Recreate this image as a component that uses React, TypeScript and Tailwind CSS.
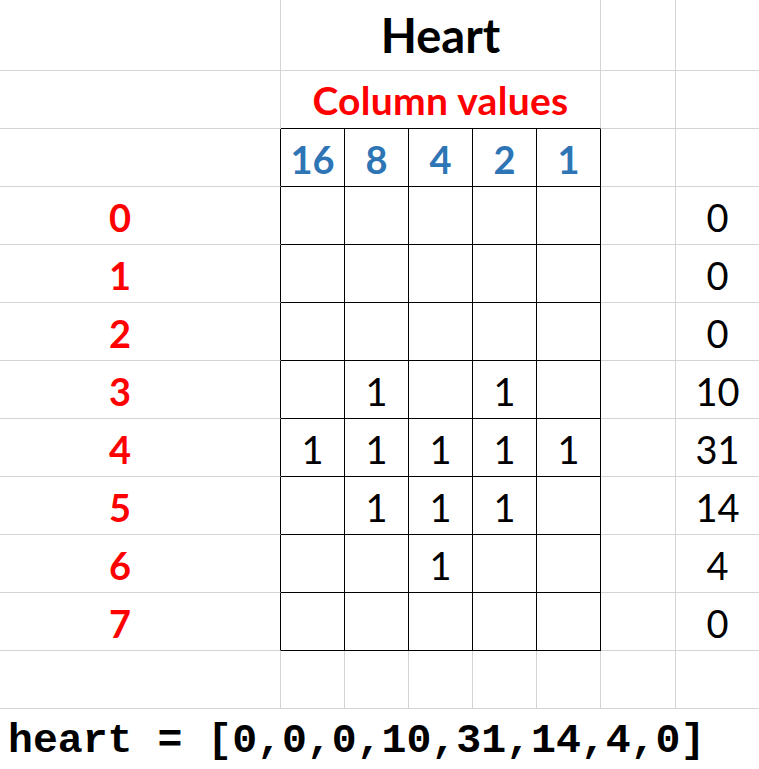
const grid = [
  [0, 0, 0, 0, 0],
  [0, 0, 0, 0, 0],
  [0, 0, 0, 0, 0],
  [0, 1, 0, 1, 0],
  [1, 1, 1, 1, 1],
  [0, 1, 1, 1, 0],
  [0, 0, 1, 0, 0],
  [0, 0, 0, 0, 0],
];

const colValues = [16, 8, 4, 2, 1];

function rowValue(row: number[]): number {
  return row.reduce((sum, bit, i) => sum + bit * colValues[i], 0);
}

export default function App() {
  const values = grid.map(rowValue);

  return (
    <div className="w-[759px] h-[769px] overflow-hidden bg-white font-['Lato',sans-serif] text-black">
      <div className="grid grid-cols-[281px_320px_75px_1fr]">
        {/* title row */}
        <div className="h-[71px] border-b border-r border-[#d4d4d4]" />
        <div className="h-[71px] border-b border-r border-[#d4d4d4] flex items-center justify-center text-[47px] font-bold leading-none">
          Heart
        </div>
        <div className="h-[71px] border-b border-r border-[#d4d4d4]" />
        <div className="h-[71px] border-b border-[#d4d4d4]" />

        {/* subtitle row */}
        <div className="h-[58px] border-b border-r border-[#d4d4d4]" />
        <div className="h-[58px] border-b border-r border-b-black border-r-[#d4d4d4] flex items-center justify-center pt-[2px] text-[39px] font-bold leading-none text-[#ff0000] tracking-[0.3px]">
          Column values
        </div>
        <div className="h-[58px] border-b border-r border-[#d4d4d4]" />
        <div className="h-[58px] border-b border-[#d4d4d4]" />

        {/* header row */}
        <div className="h-[58px] border-b border-r border-b-[#d4d4d4] border-r-black" />
        <div className="h-[58px] grid grid-cols-[64px_64px_64px_64px_64px]">
          {colValues.map((v) => (
            <div
              key={v}
              className="border-b border-r border-black flex items-center justify-center pt-[3px] text-[38px] font-bold leading-none text-[#2e75b6]"
            >
              {v}
            </div>
          ))}
        </div>
        <div className="h-[58px] border-b border-r border-[#d4d4d4]" />
        <div className="h-[58px] border-b border-[#d4d4d4]" />

        {/* data rows */}
        {grid.map((row, r) => (
          <div key={r} className="contents">
            <div className="h-[58px] border-b border-r border-b-[#d4d4d4] border-r-black flex items-center justify-center pr-[40px] pt-[3px] text-[38px] font-bold leading-none text-[#ff0000]">
              {r}
            </div>
            <div className="h-[58px] grid grid-cols-[64px_64px_64px_64px_64px]">
              {row.map((bit, c) => (
                <div
                  key={c}
                  className="border-b border-r border-black flex items-center justify-center pt-[3px] text-[38px] leading-none"
                >
                  {bit ? "1" : ""}
                </div>
              ))}
            </div>
            <div className="h-[58px] border-b border-r border-[#d4d4d4]" />
            <div className="h-[58px] border-b border-[#d4d4d4] flex items-center justify-center pt-[3px] text-[38px] leading-none">
              {values[r]}
            </div>
          </div>
        ))}

        {/* blank row */}
        <div className="h-[58px] border-b border-r border-[#d4d4d4]" />
        <div className="h-[58px] grid grid-cols-[64px_64px_64px_64px_64px]">
          {colValues.map((v) => (
            <div key={v} className="border-b border-r border-[#d4d4d4]" />
          ))}
        </div>
        <div className="h-[58px] border-b border-r border-[#d4d4d4]" />
        <div className="h-[58px] border-b border-[#d4d4d4]" />
      </div>

      <div className="h-[60px] pl-[8px] flex items-center pt-[4px] whitespace-pre font-['Liberation_Mono',monospace] font-bold text-[41.5px] leading-none">
        heart = [{values.join(",")}]
      </div>
    </div>
  );
}
